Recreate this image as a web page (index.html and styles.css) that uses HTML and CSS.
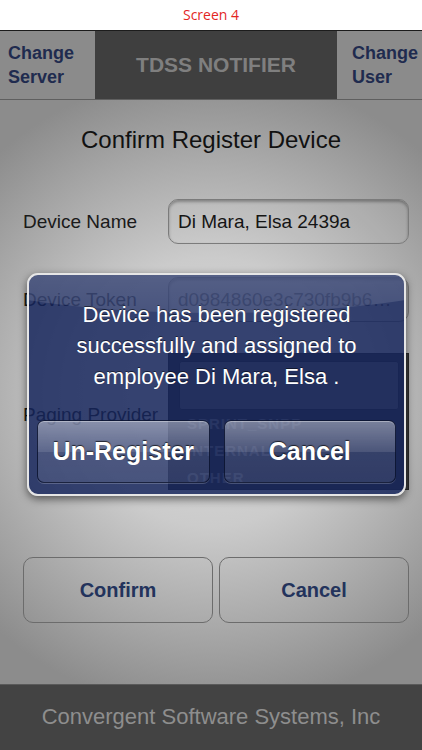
FILE: index.html
```html
<!DOCTYPE html>
<html lang="en">
<head>
    <meta charset="UTF-8">
    <meta name="viewport" content="width=device-width, initial-scale=1.0">
    <title>TDSS Notifier - Confirm Register Device</title>
    <link rel="stylesheet" href="styles.css">
</head>
<body>
    <div class="screen">
        <div class="caption">Screen 4</div>

        <div class="navbar">
            <button class="nav-button nav-left">Change<br>Server</button>
            <div class="nav-title">TDSS NOTIFIER</div>
            <button class="nav-button nav-right">Change<br>User</button>
        </div>

        <div class="content">
            <h1 class="page-title">Confirm Register Device</h1>

            <div class="form-row row-name">
                <label class="field-label">Device Name</label>
                <div class="field-box">Di Mara, Elsa 2439a</div>
            </div>

            <div class="form-row row-token">
                <label class="field-label">Device Token</label>
                <div class="field-box token">d0984860e3c730fb9b6a41c27e5d0f93b8a1</div>
            </div>

            <div class="form-row row-provider">
                <label class="field-label">Paging Provider</label>
                <div class="picker">
                    <div class="picker-selected"></div>
                    <div class="picker-item">SPRINT_SNPP</div>
                    <div class="picker-item">INTERNAL</div>
                    <div class="picker-item">OTHER</div>
                </div>
            </div>

            <div class="action-buttons">
                <button class="action-button">Confirm</button>
                <button class="action-button">Cancel</button>
            </div>

            <!-- alert liegt ueber dem Formular -->
            <div class="alert">
                <p class="alert-text">Device has been registered successfully and assigned to employee Di Mara, Elsa .</p>
                <div class="alert-buttons">
                    <button class="alert-button">Un-Register</button>
                    <button class="alert-button">Cancel</button>
                </div>
            </div>
        </div>

        <div class="footer">Convergent Software Systems, Inc</div>
    </div>
</body>
</html>
```

FILE: styles.css
```css
body {
    margin: 0;
    font-family: "Liberation Sans", Arial, sans-serif;
    background-color: white;
}
button {
    font-family: inherit;
    cursor: pointer;
}
.screen {
    width: 422px;
    height: 750px;
    display: flex;
    flex-direction: column;
    overflow: hidden;
}
.caption {
    height: 30px;
    line-height: 30px;
    text-align: center;
    font-family: "Open Sans", sans-serif;
    font-size: 14px;
    color: #e3261f;
    background-color: white;
}
.navbar {
    height: 70px;
    box-sizing: border-box;
    display: flex;
    border-top: 1px solid #1c1c1c;
    border-bottom: 1px solid #5f5f5f;
    background-color: #3f3f3f;
}
.nav-button {
    border: none;
    margin: 0;
    background-color: #8b8b8b;
    color: #1f2b4f;
    font-size: 18px;
    font-weight: bold;
    line-height: 24px;
    text-align: left;
}
.nav-left {
    width: 95px;
    padding: 0 0 0 8px;
}
.nav-right {
    width: 85px;
    padding: 0 0 0 15px;
}
.nav-title {
    flex: 1;
    display: flex;
    align-items: center;
    justify-content: center;
    font-size: 21px;
    font-weight: bold;
    color: #7f7f7f;
}
.content {
    position: relative;
    flex: 1;
    padding: 0 13px 0 23px;
    background: radial-gradient(ellipse 320px 320px at 50% 50%, #dddddd 0%, #cbcbcb 42%, #a2a2a2 80%, #8c8c8c 100%);
}
.page-title {
    margin: 25px 0 0 -10px;
    height: 30px;
    line-height: 30px;
    text-align: center;
    font-size: 24px;
    font-weight: normal;
    color: #111;
}
.form-row {
    display: grid;
    grid-template-columns: 145px 1fr;
    align-items: center;
}
.row-name {
    margin-top: 44px;
}
.row-token {
    margin-top: 33px;
}
.row-provider {
    margin-top: 31px;
    align-items: start;
}
.row-provider .field-label {
    padding-top: 51px;
}
.field-label {
    font-size: 19px;
    color: #1a1a1a;
}
.field-box {
    height: 45px;
    box-sizing: border-box;
    padding: 0 9px;
    line-height: 43px;
    font-size: 19px;
    color: #151515;
    border: 1px solid #7b7b7b;
    border-radius: 10px;
    background-color: rgba(255, 255, 255, 0.06);
    box-shadow: inset 0 2px 3px rgba(0, 0, 0, 0.3);
    white-space: nowrap;
    overflow: hidden;
    text-overflow: ellipsis;
}
.field-box.token {
    color: #5a5a5a;
}
.picker {
    height: 137px;
    box-sizing: border-box;
    padding: 7px 9px 0 10px;
    border: 1px solid #2a2a2a;
    background-color: #3a3a3a;
}
.picker-selected {
    height: 47px;
    border: 1px solid #2c2c2c;
    border-radius: 3px;
    background-color: #6e6e6e;
}
.picker-item {
    height: 27px;
    line-height: 27px;
    padding-left: 8px;
    font-size: 15px;
    font-weight: bold;
    letter-spacing: 1px;
    color: #8a8a8a;
}
.action-buttons {
    display: flex;
    gap: 6px;
    margin-top: 67px;
}
.action-button {
    flex: 1;
    height: 66px;
    border: 1px solid #6c6c6c;
    border-radius: 10px;
    background-color: transparent;
    font-size: 20px;
    font-weight: bold;
    color: #23335c;
}
.alert {
    position: absolute;
    left: 27px;
    top: 173px;
    width: 379px;
    height: 223px;
    box-sizing: border-box;
    padding: 24px 8px 11px 8px;
    display: flex;
    flex-direction: column;
    border: 2px solid #e6e6e6;
    border-radius: 11px;
    background-color: rgba(20, 36, 92, 0.83);
    box-shadow: 0 3px 8px rgba(0, 0, 0, 0.55);
    overflow: hidden;
}
.alert::before {
    content: "";
    position: absolute;
    left: -25%;
    right: -25%;
    top: -62px;
    height: 100px;
    border-radius: 50%;
    background: linear-gradient(rgba(255, 255, 255, 0.26), rgba(255, 255, 255, 0.1));
}
.alert-text {
    position: relative;
    margin: 0;
    padding: 0 20px;
    text-align: center;
    font-size: 22px;
    line-height: 31px;
    color: white;
    text-shadow: 0 -1px 0 rgba(0, 0, 0, 0.5);
}
.alert-buttons {
    margin-top: auto;
    display: flex;
    gap: 14px;
}
.alert-button {
    flex: 1;
    height: 63px;
    border: 1px solid rgba(8, 16, 45, 0.85);
    border-radius: 7px;
    background: linear-gradient(rgba(255, 255, 255, 0.42) 0%, rgba(255, 255, 255, 0.22) 50%, rgba(255, 255, 255, 0.12) 51%, rgba(255, 255, 255, 0.1) 100%);
    box-shadow: inset 0 1px 0 rgba(255, 255, 255, 0.35), 0 1px 0 rgba(255, 255, 255, 0.2);
    font-size: 25px;
    font-weight: bold;
    color: white;
    text-shadow: 0 -1px 1px rgba(0, 0, 0, 0.7);
}
.footer {
    height: 66px;
    box-sizing: border-box;
    border-top: 1px solid #5a5a5a;
    background-color: #434343;
    text-align: center;
    line-height: 64px;
    font-size: 22px;
    color: #8e8e8e;
}
```
